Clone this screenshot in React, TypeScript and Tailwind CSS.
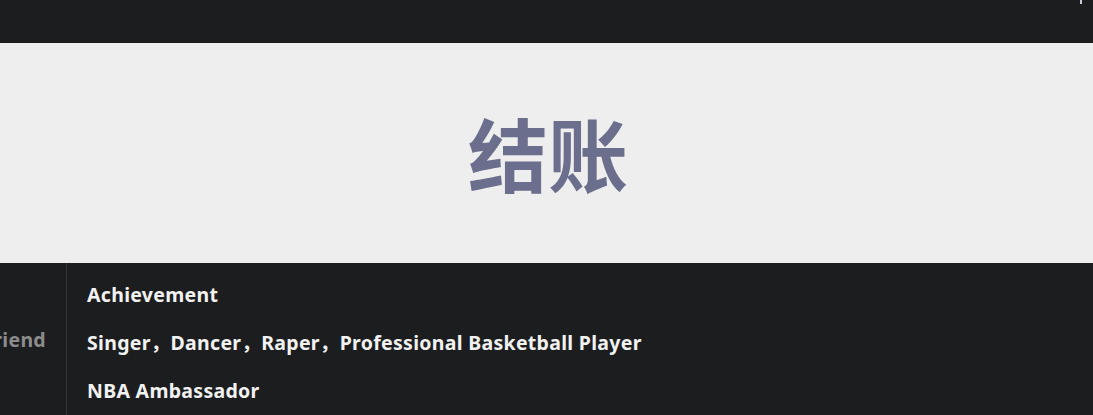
export default function App() {
  const lines = [
    "Achievement",
    "Singer，Dancer，Raper，Professional Basketball Player",
    "NBA Ambassador",
  ]

  return (
    <div className="h-[415px] w-full overflow-hidden bg-[#1c1d1f] font-['Noto_Sans','Noto_Sans_CJK_SC',sans-serif]">
      <header className="h-[43px] flex justify-end pr-[11px]">
        <span className="block w-[2px] h-[4px] bg-[#c9c9d6]"></span>
      </header>

      <section className="h-[220px] bg-[#eeeeee] flex items-center justify-center">
        <h1 className="text-[80px] leading-none font-bold text-[#6b6e8c] font-['Noto_Sans_CJK_SC',sans-serif] pl-[3px] pb-[4px]">结账</h1>
      </section>

      <div className="flex h-[152px]">
        <aside className="w-[67px] shrink-0 border-r border-[#333437] overflow-hidden flex justify-end pr-[20px] pt-[53px]">
          <p className="whitespace-nowrap text-[19.5px] leading-[48px] font-bold tracking-[0.3px] text-[#8c8c8c]">Girlfriend</p>
        </aside>
        <main className="pl-[20px] pt-[8px] text-[19.5px] leading-[48px] font-bold tracking-[0.3px] text-[#f2f2f2]">
          {lines.map(line => (
            <p key={line} className="whitespace-nowrap">{line}</p>
          ))}
        </main>
      </div>
    </div>
  )
}
